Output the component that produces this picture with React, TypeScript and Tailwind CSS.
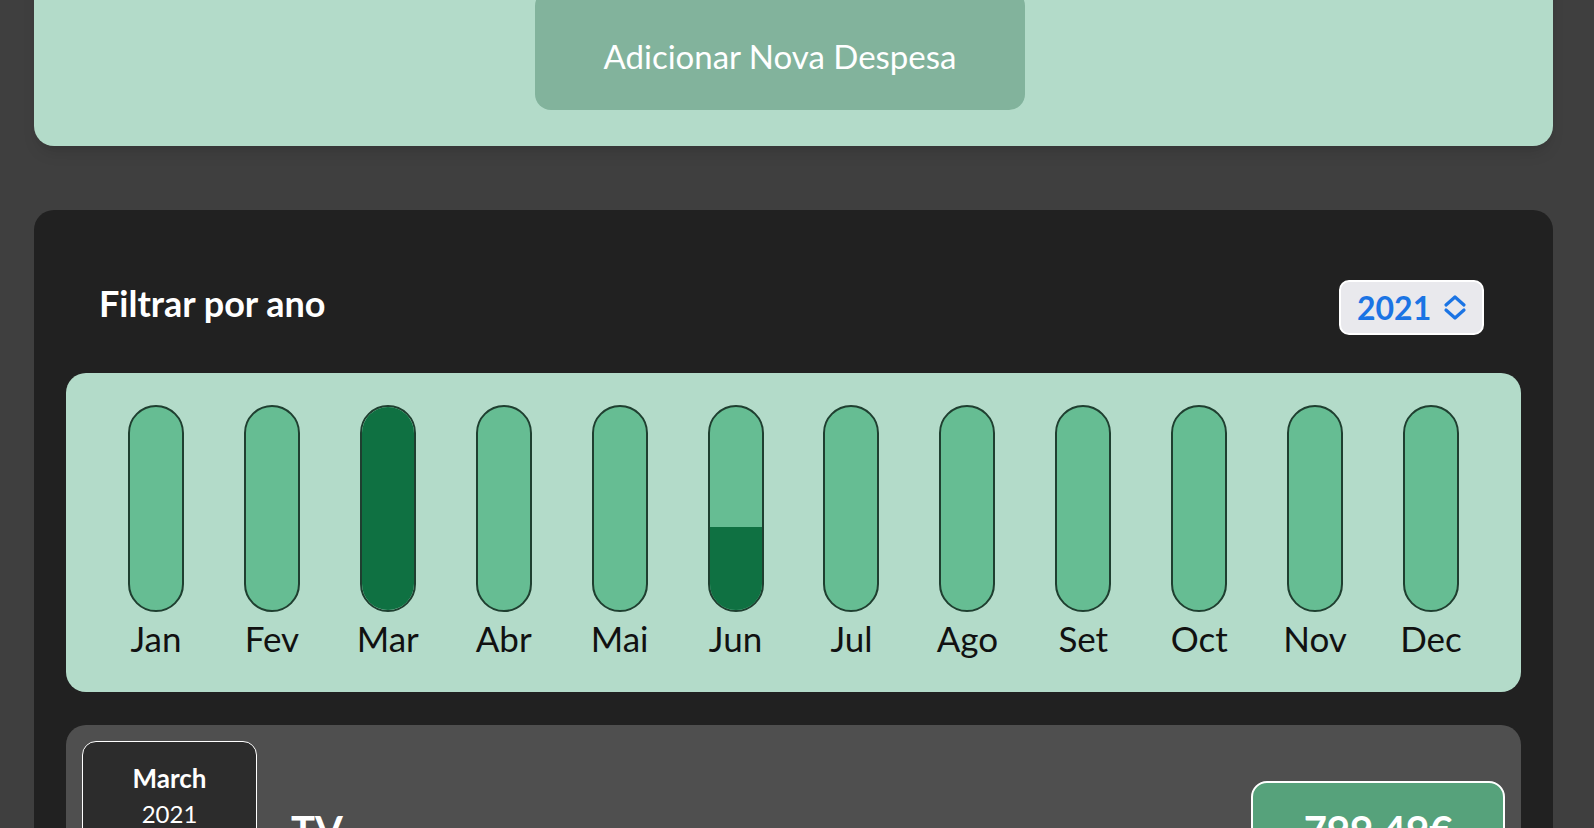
const months = ["Jan", "Fev", "Mar", "Abr", "Mai", "Jun", "Jul", "Ago", "Set", "Oct", "Nov", "Dec"];

// fill fraction of each month bar (0..1)
const fills = [0, 0, 1, 0, 0, 0.41, 0, 0, 0, 0, 0, 0];

function ChartBar({ label, fill }: { label: string; fill: number }) {
  return (
    <div className="flex flex-col items-center">
      <div className="h-[207px] w-[56px] rounded-[28px] border-2 border-[#1f3f30] bg-[#66bd93] overflow-hidden flex flex-col justify-end">
        <div className="w-full bg-[#0f7142]" style={{ height: `${fill * 100}%` }}></div>
      </div>
      <span className="mt-[4px] text-[35px] leading-[44px] text-[#111]">{label}</span>
    </div>
  );
}

function UpDownIcon() {
  return (
    <svg width="24" height="27" viewBox="0 0 24 27" fill="none" stroke="#1b74e4" strokeWidth="3.2" strokeLinecap="round" strokeLinejoin="round">
      <path d="M3 11 L12 3 L21 11" />
      <path d="M3 16 L12 24 L21 16" />
    </svg>
  );
}

export default function App() {
  return (
    <div
      className="min-h-screen bg-[#3f3f3f] pl-[34px] pr-[41px] pb-10 overflow-hidden"
      style={{ fontFamily: "Lato, 'Noto Sans', sans-serif" }}
    >
      {/* New expense */}
      <div className="-mt-[40px] bg-[#b3dbc9] rounded-[20px] pt-[30px] pb-[36px] pr-[27px] flex justify-center shadow-lg">
        <button className="w-[490px] h-[120px] bg-[#82b39c] rounded-[16px] text-white text-[33px] leading-[40px] pt-[46px] pb-[34px]">
          Adicionar Nova Despesa
        </button>
      </div>

      {/* Expenses */}
      <div className="mt-[64px] bg-[#212121] rounded-[20px] px-[32px] pt-[70px] pb-8">
        <div className="flex items-center justify-between pl-[33px] pr-[37px] h-[55px] mb-[38px]">
          <h2 className="text-white font-bold text-[36px] -mt-[10px]">Filtrar por ano</h2>
          <div className="h-[55px] w-[145px] bg-[#e9e9ed] border-2 border-white rounded-[10px] flex items-center pl-[16px] gap-[12px]">
            <span className="text-[#1b74e4] font-bold text-[32px] leading-none">2021</span>
            <UpDownIcon />
          </div>
        </div>

        <div className="bg-[#b3dbc9] rounded-[20px] h-[319px] px-[32px] pt-[32px] grid grid-cols-12">
          {months.map((m, i) => (
            <ChartBar key={m} label={m} fill={fills[i]} />
          ))}
        </div>

        <ul className="mt-[33px]">
          <li className="bg-[#4f4f4f] rounded-[20px] p-[16px] flex items-center">
            <div className="w-[175px] h-[170px] bg-[#2c2c2c] border-[1.5px] border-white rounded-[14px] flex flex-col items-center pt-[20px] text-white">
              <span className="font-bold text-[26px] leading-[32px]">March</span>
              <span className="text-[24px] leading-[32px] mt-[4px]">2021</span>
              <span className="font-bold text-[44px] leading-[52px]">24</span>
            </div>
            <h3 className="ml-[34px] text-white font-bold text-[40px] leading-[48px] flex-1 mt-[8px]">TV</h3>
            <div className="w-[254px] h-[90px] bg-[#56a27b] border-2 border-white rounded-[16px] flex items-center justify-center text-white font-bold text-[40px] pt-[8px]">
              799.49€
            </div>
          </li>
        </ul>
      </div>
    </div>
  );
}
